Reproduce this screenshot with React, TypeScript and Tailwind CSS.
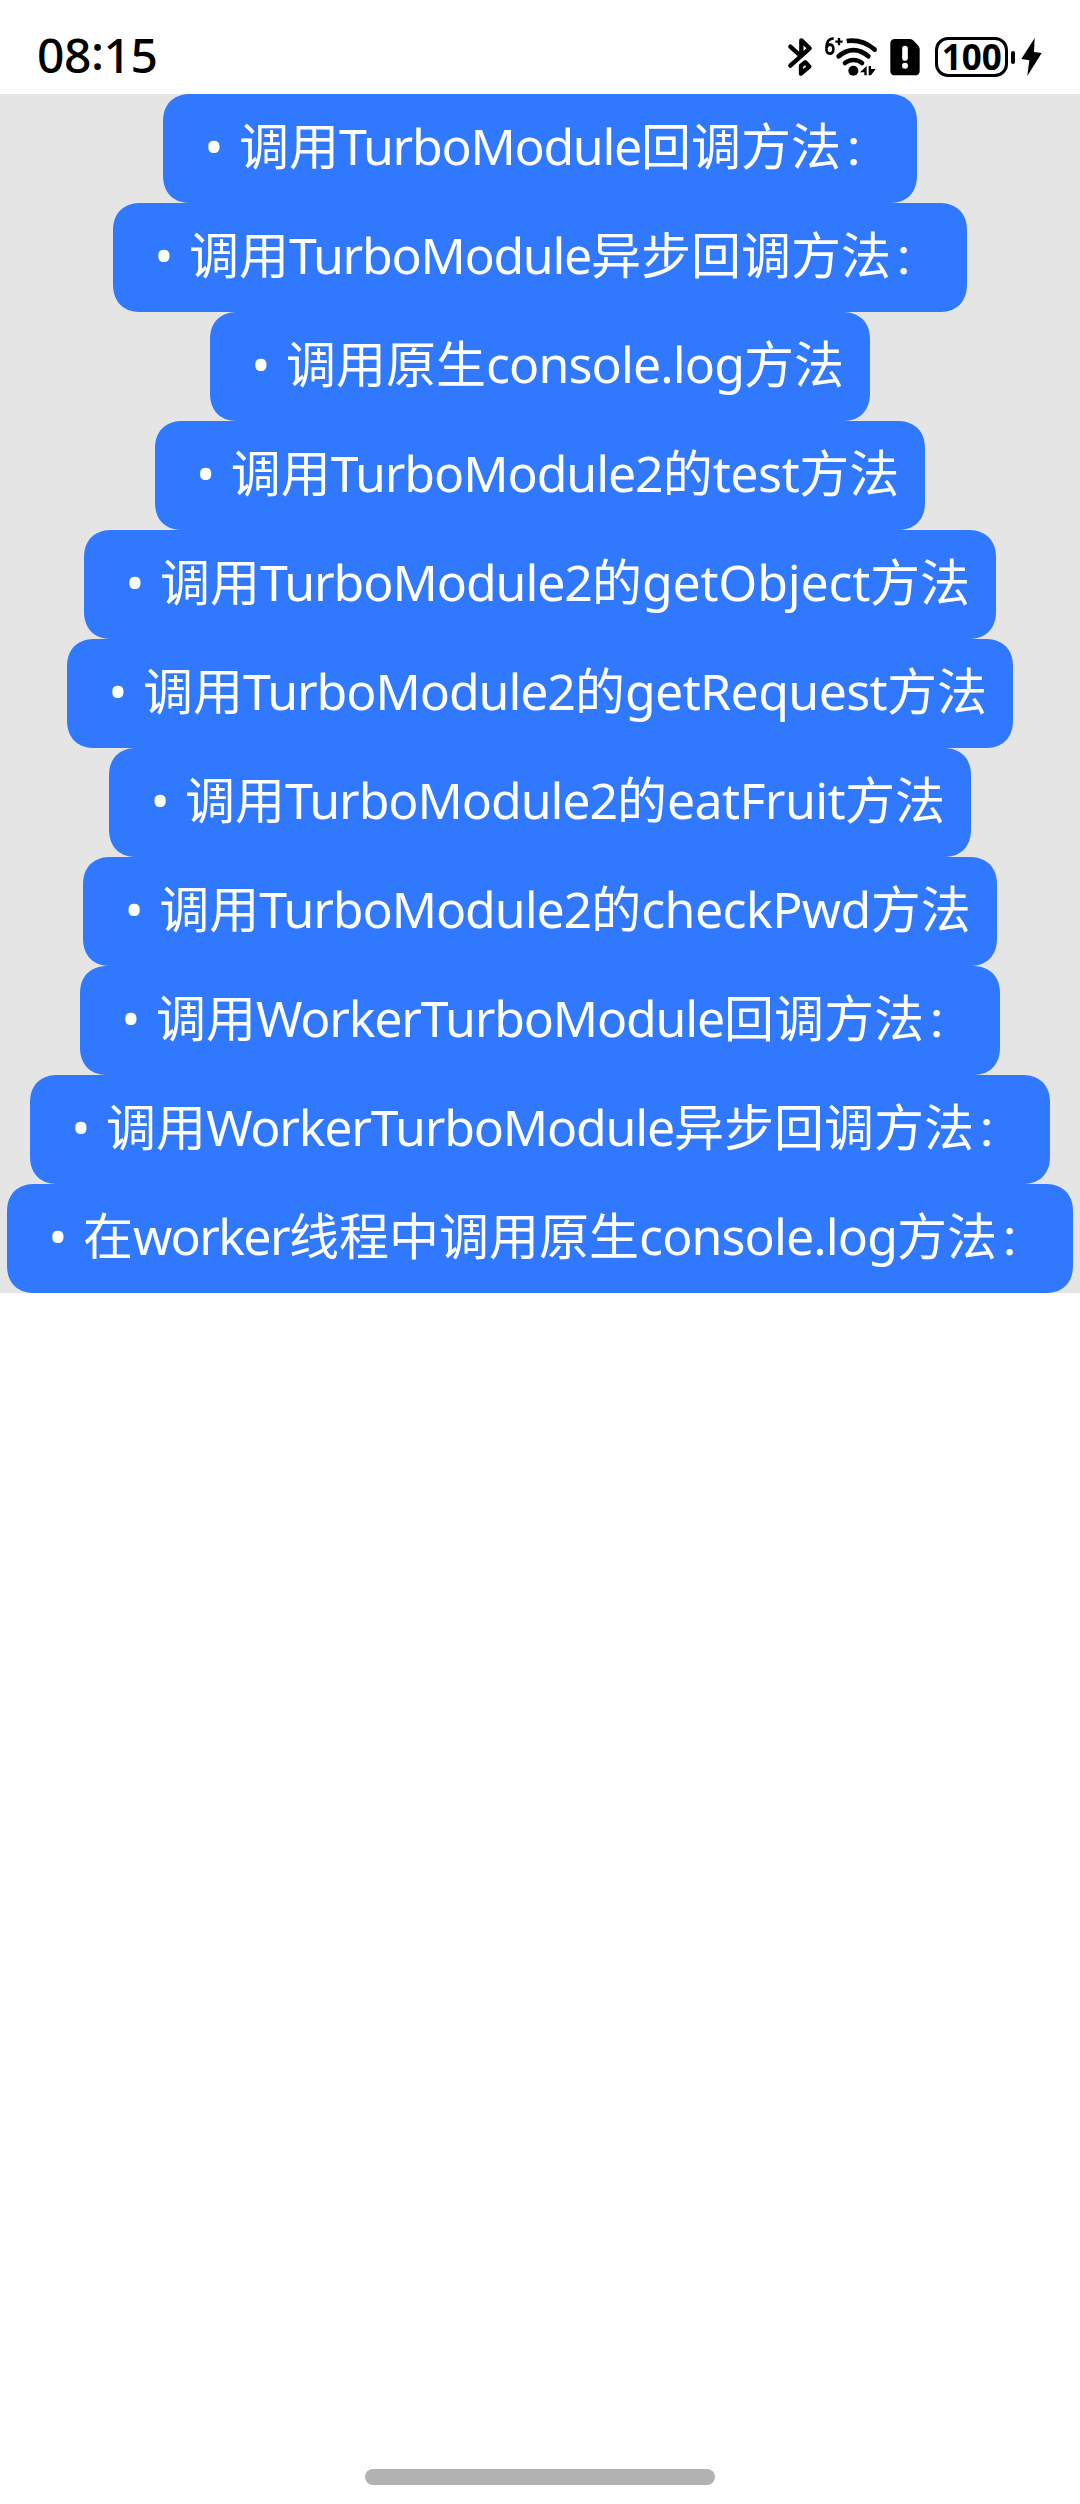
type Run = [text: string, style?: string];

const COLON: Run = ["：", "inline-block w-[50px] pl-[2px] text-left text-[42px] leading-none"];
const TURBO_MODULE: Run = ["TurboModule", "tracking-[-1.29px]"];
const TURBO_MODULE_2: Run = ["TurboModule2", "tracking-[-1.07px]"];
const WORKER_TURBO_MODULE: Run = ["WorkerTurboModule", "tracking-[-1.18px]"];
const CONSOLE_LOG: Run = ["console.log", "tracking-[-0.88px]"];

const buttons: Run[][] = [
  [["调用"], TURBO_MODULE, ["回调方法"], COLON],
  [["调用"], TURBO_MODULE, ["异步回调方法"], COLON],
  [["调用原生"], CONSOLE_LOG, ["方法"]],
  [["调用"], TURBO_MODULE_2, ["的"], ["test", "tracking-[-0.4px]"], ["方法"]],
  [["调用"], TURBO_MODULE_2, ["的"], ["getObject", "tracking-[-0.2px]"], ["方法"]],
  [["调用"], TURBO_MODULE_2, ["的"], ["getRequest", "tracking-[-0.6px]"], ["方法"]],
  [["调用"], TURBO_MODULE_2, ["的"], ["eatFruit", "tracking-[-0.6px]"], ["方法"]],
  [["调用"], TURBO_MODULE_2, ["的"], ["checkPwd", "tracking-[-0.55px]"], ["方法"]],
  [["调用"], WORKER_TURBO_MODULE, ["回调方法"], COLON],
  [["调用"], WORKER_TURBO_MODULE, ["异步回调方法"], COLON],
  [["在"], ["worker", "tracking-[-1.6px]"], ["线程中调用原生"], CONSOLE_LOG, ["方法"], COLON],
];

function BluetoothIcon() {
  return (
    <svg viewBox="52 48 78 126" className="h-[42px] w-[26px]" fill="none" stroke="#000" strokeWidth="13" strokeLinecap="round" strokeLinejoin="round">
      <path d="M62 80 L93 108 M95 104 V61 L120 85 L62 137" />
      <path d="M94 137 V161 L119 140 L107 127 Z" />
    </svg>
  );
}

function WifiIcon() {
  return (
    <svg viewBox="160 48 162 126" className="ml-[10px] h-[42px] w-[54px]" fill="none">
      <path d="M192 56 C178 54 170 66 170 84 C170 96 173 101 180 101 C187 101 191 95 191 87 C191 79 187 74 181 74 C175 74 171 79 170 86" stroke="#000" strokeWidth="8" />
      <path d="M208 54 V76 M197 65 H219" stroke="#000" strokeWidth="7" />
      <path d="M231 63 C262 59 293 70 314 88" stroke="#000" strokeWidth="14" />
      <circle cx="315" cy="89" r="7" fill="#000" />
      <path d="M207 109 C234 84 269 84 296 109" stroke="#000" strokeWidth="14" strokeLinecap="round" />
      <path d="M226 129 C241 117 262 117 277 129" stroke="#000" strokeWidth="14" strokeLinecap="round" />
      <circle cx="251" cy="152" r="15" fill="#000" />
      <path d="M291 138 V166 H284 V157 H271 Z" fill="#000" />
      <path d="M297 138 H304 V147 H318 L304 166 H297 Z" fill="#000" />
    </svg>
  );
}

function SimAlertIcon() {
  return (
    <svg viewBox="360 48 90 126" className="ml-[13px] h-[42px] w-[30px]">
      <path d="M375 57 H420 Q426 57 431 62 L445 77 Q449 82 449 88 V152 Q449 166 435 166 H375 Q361 166 361 152 V71 Q361 57 375 57 Z" fill="#000" />
      <path d="M405 86 V114" stroke="#fff" strokeWidth="17" strokeLinecap="round" />
      <circle cx="405" cy="137" r="9" fill="#fff" />
    </svg>
  );
}

function BoltIcon() {
  return (
    <svg viewBox="754 48 63 126" className="ml-[6px] h-[42px] w-[21px]">
      <path d="M795 54 L755 117 L779 121 L773 168 L816 99 L793 96 Z" fill="#000" />
    </svg>
  );
}

function StatusBar() {
  return (
    <header className="flex h-[94px] items-start justify-between pr-[37.7px] pl-[37px] font-['Noto_Sans'] text-black">
      <div className="flex pt-[21px] text-[48px] leading-[68px] font-medium tracking-[-0.5px]">
        <span>08</span>
        <span className="-translate-y-[3px]">:</span>
        <span>15</span>
      </div>
      <div className="flex items-center pt-[36px]">
        <BluetoothIcon />
        <WifiIcon />
        <SimAlertIcon />
        <div className="ml-[15px] flex h-[40px] w-[73px] items-center justify-center rounded-[13px] border-3 border-black pb-px text-[35px] leading-none font-bold">
          <span>100</span>
        </div>
        <div className="ml-[3px] h-[13px] w-1 rounded-full bg-black" />
        <BoltIcon />
      </div>
    </header>
  );
}

export default function App() {
  return (
    <div className="flex h-[2504px] w-[1080px] flex-col bg-white">
      <StatusBar />
      <main className="flex flex-col items-center bg-[#e5e5e5]">
        {buttons.map((runs, i) => (
          <button
            key={i}
            type="button"
            lang="zh-CN"
            className="flex h-[109px] items-center rounded-[28px] bg-[#3079ff] px-[26px] pb-[5px] font-['Noto_Sans','Noto_Sans_CJK_SC',sans-serif] text-[50px] leading-[68px] whitespace-nowrap text-white [corner-shape:superellipse(1.2)]"
          >
            <span className="w-[50px] text-center">•</span>
            <span>
              {runs.map(([text, style], j) => (
                <span key={j} className={style}>
                  {text}
                </span>
              ))}
            </span>
          </button>
        ))}
      </main>
      <div className="mx-auto mt-auto mb-[19px] h-4 w-[350px] rounded-full bg-[#b2b2b2]" />
    </div>
  );
}
